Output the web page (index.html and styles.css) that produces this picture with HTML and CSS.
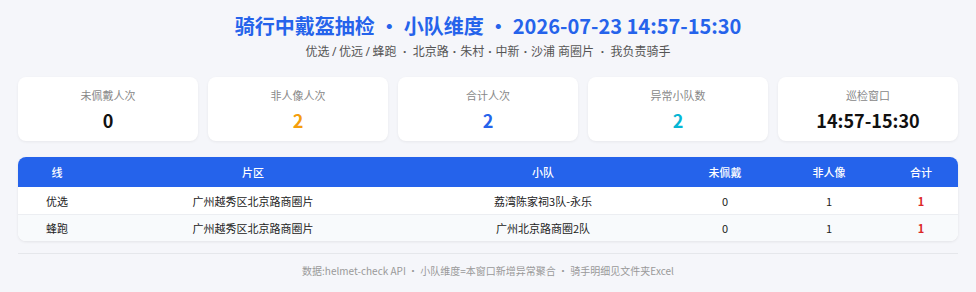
FILE: index.html
```html
<!DOCTYPE html>
<html lang="zh">
<head>
<meta charset="utf-8">
<link rel="stylesheet" href="styles.css">
</head>
<body>
<div class="page">
  <header class="head">
    <h1 class="title">骑行中戴盔抽检 · 小队维度 · 2026-07-23 14:57-15:30</h1>
    <div class="sub">优选<span class="sl">/</span>优远<span class="sl">/</span>蜂跑<span class="sep">·</span>北京路<span class="dt">·</span>朱村<span class="dt">·</span>中新<span class="dt">·</span>沙浦 商圈片<span class="sep">·</span>我负责骑手</div>
  </header>

  <section class="cards">
    <div class="card"><div class="label">未佩戴人次</div><div class="val c-black">0</div></div>
    <div class="card"><div class="label">非人像人次</div><div class="val c-orange">2</div></div>
    <div class="card"><div class="label">合计人次</div><div class="val c-blue">2</div></div>
    <div class="card"><div class="label">异常小队数</div><div class="val c-cyan">2</div></div>
    <div class="card"><div class="label">巡检窗口</div><div class="val c-black">14:57-15:30</div></div>
  </section>

  <section class="table">
    <div class="row thead">
      <div>线</div><div>片区</div><div>小队</div><div>未佩戴</div><div>非人像</div><div>合计</div>
    </div>
    <div class="row">
      <div>优选</div><div>广州越秀区北京路商圈片</div><div>荔湾陈家祠3队-永乐</div><div>0</div><div>1</div><div class="red">1</div>
    </div>
    <div class="row alt">
      <div>蜂跑</div><div>广州越秀区北京路商圈片</div><div>广州北京路商圈2队</div><div>0</div><div>1</div><div class="red">1</div>
    </div>
  </section>

  <footer class="foot">数据:helmet-check API · 小队维度=本窗口新增异常聚合 · 骑手明细见文件夹Excel</footer>
</div>
</body>
</html>
```

FILE: styles.css
```css
* { box-sizing: border-box; }
html, body { margin: 0; padding: 0; }
body {
  background: #f5f6fa;
  font-family: "Noto Sans CJK SC", "Noto Sans", sans-serif;
  color: #222;
}
.page { padding: 12px 18px 0; }
.head { text-align: center; }
.title {
  margin: 0;
  font-size: 20px;
  line-height: 28px;
  font-weight: 700;
  color: #2563eb;
}
.sub {
  margin-top: 4px;
  font-family: "Noto Sans", "Noto Sans CJK SC", sans-serif;
  font-size: 12px;
  line-height: 16px;
  color: #555;
}
.sl { margin: 0 2.5px; }
.sep { margin: 0 6.5px; font-weight: 700; }
.dt { margin: 0 4px; font-weight: 700; }
.cards {
  display: grid;
  grid-template-columns: repeat(5, 1fr);
  gap: 10px;
  margin-top: 17px;
}
.card {
  background: #fff;
  border-radius: 8px;
  height: 64px;
  box-shadow: 0 1px 3px rgba(0,0,0,0.06);
  display: flex;
  flex-direction: column;
  align-items: center;
  padding-top: 10px;
}
.label { font-size: 11px; line-height: 16px; color: #888; }
.val { font-size: 18px; line-height: 24px; font-weight: 700; margin-top: 5px; }
.c-black { color: #111; }
.c-orange { color: #f59e0b; }
.c-blue { color: #2563eb; }
.c-cyan { color: #06b6d4; }

.table {
  margin-top: 16px;
  background: #fff;
  border-radius: 8px;
  overflow: hidden;
  box-shadow: 0 1px 3px rgba(0,0,0,0.08);
}
.row {
  display: grid;
  grid-template-columns: 78px 314px 266px 98px 110px 74px;
  height: 27px;
  align-items: center;
  font-size: 11px;
  color: #222;
  text-align: center;
}
.row + .row { border-top: 1px solid #eceef2; }
.thead {
  background: #2563eb;
  color: #fff;
  height: 30px;
  font-weight: 500;
}
.thead + .row { border-top: none; }
.alt { background: #f8fafc; }
.red { color: #dc2626; font-weight: 700; }

.foot {
  margin-top: 12px;
  border-top: 1px solid #e5e7eb;
  padding-top: 9px;
  text-align: center;
  font-size: 10px;
  line-height: 16px;
  color: #999;
}
```
